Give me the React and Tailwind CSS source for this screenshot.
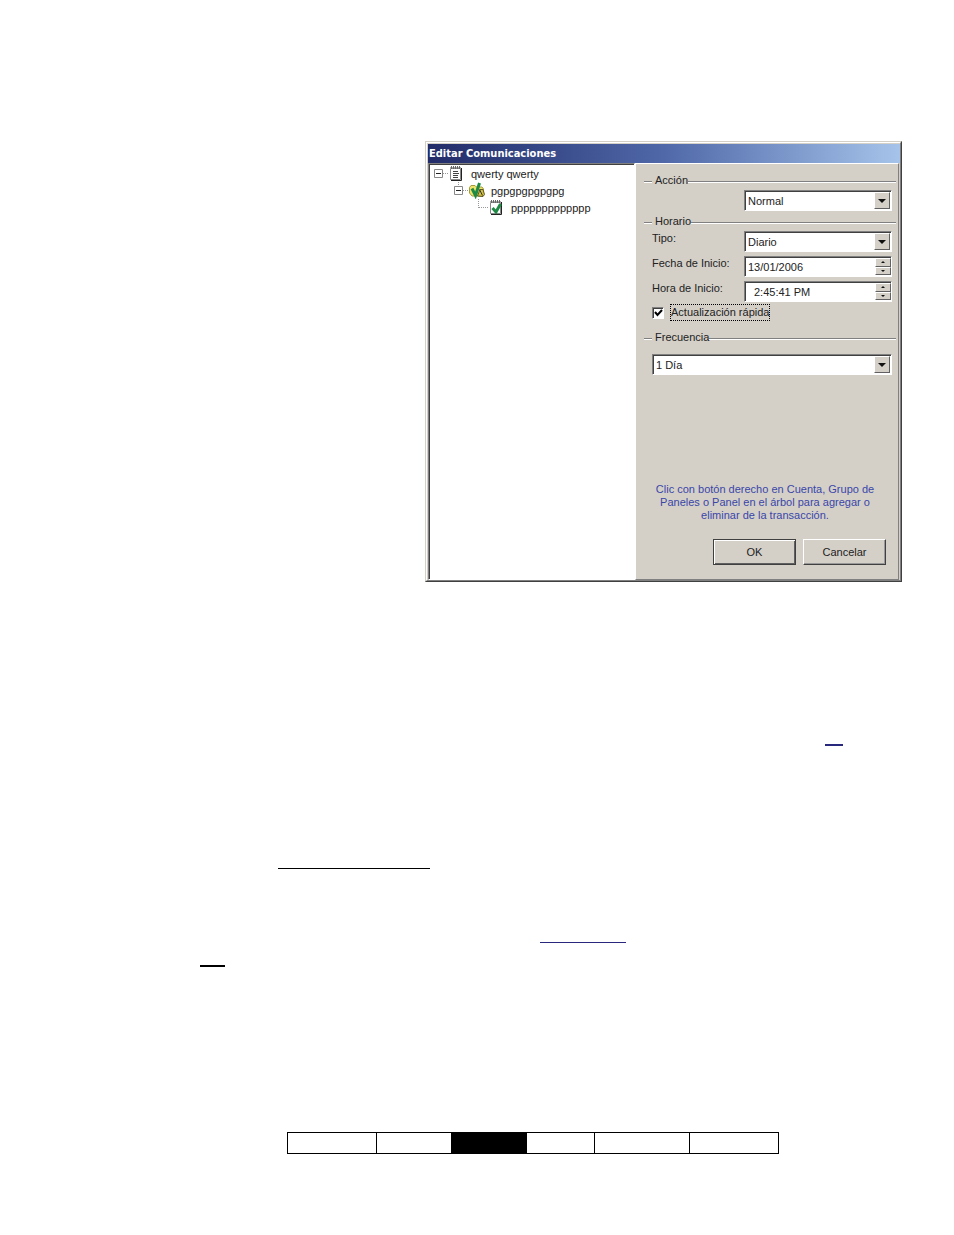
import { useState } from 'react';

const TREE = [
  { label: 'qwerty qwerty', icon: 'account', indent: 'pl-1', toggle: true },
  { label: 'pgpgpgpgpgpg', icon: 'group', indent: 'pl-6', toggle: true, stub: true },
  { label: 'ppppppppppppp', icon: 'panel', indent: 'pl-11' },
];

const FOOTER_CELLS = [
  { id: 1, width: 'w-[89px]' },
  { id: 2, width: 'w-[75px]' },
  { id: 3, width: 'w-[75px]', active: true },
  { id: 4, width: 'w-[68px]' },
  { id: 5, width: 'w-[95px]' },
  { id: 6, width: 'w-[89px]' },
];

const SUNKEN = 'border border-t-[#808080] border-l-[#808080] border-b-white border-r-white shadow-[inset_1px_1px_0_#404040]';
const RAISED = 'bg-[#d4d0c8] border border-t-white border-l-white border-b-[#606060] border-r-[#606060]';

function Notepad({ checked }) {
  return (
    <svg width="16" height="17" viewBox="0 0 16 17" fill="none">
      <path d="M1.5 3.5h10v11h-10z" fill="#fff" stroke="#888" />
      <path d="M12.5 3v12.5H2" stroke="#222" />
      <path d="M2.5 1v3M4.5 1v3M6.5 1v3M8.5 1v3M10.5 1v3" stroke="#666" />
      <path d="M1 2.5h11" stroke="#aaa" strokeDasharray="1 1" />
      {checked ? (
        <path d="M3.500 9l3.500 4L11.500 5" stroke="#1f8a45" strokeWidth="3" />
      ) : (
        <path d="M4 6.5h5M4 8.5h6M4 10.5h5M4 12.5h5" stroke="#444" />
      )}
    </svg>
  );
}

function Folder() {
  return (
    <svg width="16" height="17" viewBox="0 0 16 17" fill="none">
      <path d="M.5 5.500L2 3.500h4l1.500 1.500H13l1.500 2v6L13 14H3L.5 11z" fill="#efe36a" stroke="#a39b3c" />
      <path d="M8.500 14L11 7.500h3l1.500 5L14 14.500z" fill="#d2c040" stroke="#5d5926" />
      <path d="M10.500 7.500l3 6" stroke="#333" />
      <path d="M3 6.500l3.500 7L10.500 1" stroke="#1f8a45" strokeWidth="3" />
    </svg>
  );
}

function Connector({ toggle, stub }) {
  if (!toggle) {
    return (
      <svg width="15" height="17" viewBox="0 0 15 17" fill="none" stroke="#999" strokeDasharray="1 1">
        <path d="M4.5 0v9M5 8.5h10" />
      </svg>
    );
  }
  return (
    <svg width="15" height="17" viewBox="0 0 15 17" fill="none">
      {stub && <path d="M4.5 0v4" stroke="#999" strokeDasharray="1 1" />}
      <path d="M9 8.500h6" stroke="#999" strokeDasharray="1 1" />
      <path d="M.5 4.500h8v8h-8z" fill="#fff" stroke="#888" />
      <path d="M2 8.500h5" stroke="#222" />
    </svg>
  );
}

function GroupTitle({ children }) {
  return (
    <div className="flex h-3.5 items-center gap-[3px]">
      <span className="mt-1 h-0.5 w-2 border-t border-t-[#808080] bg-white" />
      <h2>{children}</h2>
      <span className="-ml-[3px] mt-1 h-0.5 flex-1 border-t border-t-[#808080] bg-white" />
    </div>
  );
}

function SelectBox({ id, label, options }) {
  return (
    <div className={`relative h-[21px] min-w-0 flex-1 bg-white ${SUNKEN}`}>
      <select id={id} aria-label={label} className="h-full w-full appearance-none bg-transparent pl-[3px] pr-5 outline-none">
        {options.map((o) => <option key={o}>{o}</option>)}
      </select>
      <span className={`pointer-events-none absolute bottom-px right-px top-px flex w-4 items-center justify-center ${RAISED}`}>
        <svg width="8" height="4" viewBox="0 0 8 4"><path d="M0 0h8L4 4z" fill="#111" /></svg>
      </span>
    </div>
  );
}

function Spinner({ id, initial, padding }) {
  const [value, setValue] = useState(initial);
  return (
    <div className={`flex h-[21px] min-w-0 flex-1 bg-white p-px pr-0 ${SUNKEN}`}>
      <input
        id={id}
        value={value}
        onChange={(e) => setValue(e.target.value)}
        className={`min-w-0 flex-1 bg-transparent outline-none ${padding}`}
      />
      <div className="flex w-4 flex-col">
        <button type="button" aria-label="Subir" className={`flex flex-1 items-center justify-center ${RAISED}`}>
          <svg width="4" height="2" viewBox="0 0 4 2"><path d="M0 2h4L2 0z" fill="#111" /></svg>
        </button>
        <button type="button" aria-label="Bajar" className={`flex flex-1 items-center justify-center ${RAISED}`}>
          <svg width="4" height="2" viewBox="0 0 4 2"><path d="M0 0h4L2 2z" fill="#111" /></svg>
        </button>
      </div>
    </div>
  );
}

function Field({ id, label, children }) {
  return (
    <div className="flex items-start">
      <label htmlFor={id} className="w-[92px] flex-shrink-0">{label}</label>
      {children}
    </div>
  );
}

function Dialog() {
  const [fast, setFast] = useState(true);

  return (
    <section className="ml-auto mr-[52px] w-1/2 border border-b-[#404040] border-l-[#d4d0c8] border-r-[#404040] border-t-[#d4d0c8] bg-[#d4d0c8] text-[11px] leading-[14px] text-[#222]">
      <div className="border border-b-[#808080] border-l-white border-r-[#808080] border-t-white pl-px pt-px">
        <h1 className="h-[19px] bg-linear-to-r from-[#222c69] via-[#5068a8] to-[#a6c4ea] pl-px font-['DejaVu_Sans_Condensed','DejaVu_Sans',sans-serif] font-bold leading-[19px] text-white">
          Editar Comunicaciones
        </h1>

        <div className="flex min-h-[417px] pr-px">
          {/* Account tree */}
          <ul className={`min-w-0 flex-1 bg-white pl-px pt-px ${SUNKEN}`}>
            {TREE.map((node) => (
              <li key={node.label} className={`flex h-[17px] items-center ${node.indent}`}>
                <Connector toggle={node.toggle} stub={node.stub} />
                {node.icon === 'group' ? <Folder /> : <Notepad checked={node.icon === 'panel'} />}
                <span className="ml-1.5">{node.label}</span>
              </li>
            ))}
          </ul>

          {/* Settings */}
          <form
            onSubmit={(e) => e.preventDefault()}
            className="flex w-[264px] flex-shrink-0 flex-col border border-b-[#808080] border-l-white border-r-[#808080] border-t-white pb-3.5 pl-2 pr-0.5 pt-[9px]"
          >
            <GroupTitle>Acción</GroupTitle>
            <div className="mb-[3px] mt-[3px] flex pl-[100px] pr-1">
              <SelectBox id="accion" label="Acción" options={['Normal']} />
            </div>

            <GroupTitle>Horario</GroupTitle>
            <div className="mt-[3px] flex flex-col gap-1 pl-2 pr-1">
              <Field id="tipo" label="Tipo:">
                <SelectBox id="tipo" options={['Diario']} />
              </Field>
              <Field id="fecha" label="Fecha de Inicio:">
                <Spinner id="fecha" initial="13/01/2006" padding="pl-0.5" />
              </Field>
              <Field id="hora" label="Hora de Inicio:">
                <Spinner id="hora" initial="2:45:41 PM" padding="pl-2" />
              </Field>
            </div>
            <label className="mb-[9px] mt-0.5 flex h-[17px] items-center gap-1.5 pl-2">
              <span className={`relative flex h-3 w-3 bg-white ${SUNKEN}`}>
                <input
                  type="checkbox"
                  checked={fast}
                  onChange={(e) => setFast(e.target.checked)}
                  className="h-full w-full appearance-none outline-none"
                />
                {fast && (
                  <svg className="pointer-events-none absolute inset-0" width="10" height="10" viewBox="0 0 10 10" fill="none">
                    <path d="M2 4l2.500 3L9 2" stroke="#000" strokeWidth="2" />
                  </svg>
                )}
              </span>
              <span className="border border-dotted border-black leading-[15px]">Actualización rápida</span>
            </label>

            <GroupTitle>Frecuencia</GroupTitle>
            <div className="mt-2.5 flex pl-2 pr-1">
              <SelectBox id="frecuencia" label="Frecuencia" options={['1 Día']} />
            </div>

            <p className="mb-[17px] ml-2 mr-[18px] mt-auto text-center leading-[13px] text-[#3a46a8]">
              Clic con botón derecho en Cuenta, Grupo de Paneles o Panel en el árbol para agregar o eliminar de la transacción.
            </p>
            <div className="flex justify-end gap-[7px] pr-2.5">
              <button type="submit" className="h-[26px] w-[83px] border border-[#404040] shadow-[inset_1px_1px_0_#fff,inset_-1px_-1px_0_#606060]">OK</button>
              <button type="button" className="h-[26px] w-[83px] border border-b-[#404040] border-l-white border-r-[#404040] border-t-white shadow-[inset_-1px_-1px_0_#999]">Cancelar</button>
            </div>
          </form>
        </div>
      </div>
    </section>
  );
}

export default function App() {
  return (
    <main className="flex min-h-screen flex-col bg-white pt-[141px] font-['Liberation_Sans',Arial,sans-serif]">
      <Dialog />

      {/* Underlined blanks */}
      <div className="mr-[111px] mt-[162px] h-0.5 w-[18px] self-end bg-[#28287c]" />
      <div className="ml-[278px] mt-[122px] h-px w-[152px] bg-black" />
      <div className="ml-[540px] mt-[73px] h-px w-[86px] bg-[#28287c]" />
      <div className="ml-[200px] mt-[22px] h-0.5 w-[25px] bg-black" />

      <table className="ml-[287px] mt-[165px] w-[492px] table-fixed border-collapse">
        <tbody>
          <tr>
            {FOOTER_CELLS.map((cell) => (
              <td key={cell.id} className={`h-[21px] border border-black ${cell.width} ${cell.active ? 'bg-black' : ''}`} />
            ))}
          </tr>
        </tbody>
      </table>
    </main>
  );
}
